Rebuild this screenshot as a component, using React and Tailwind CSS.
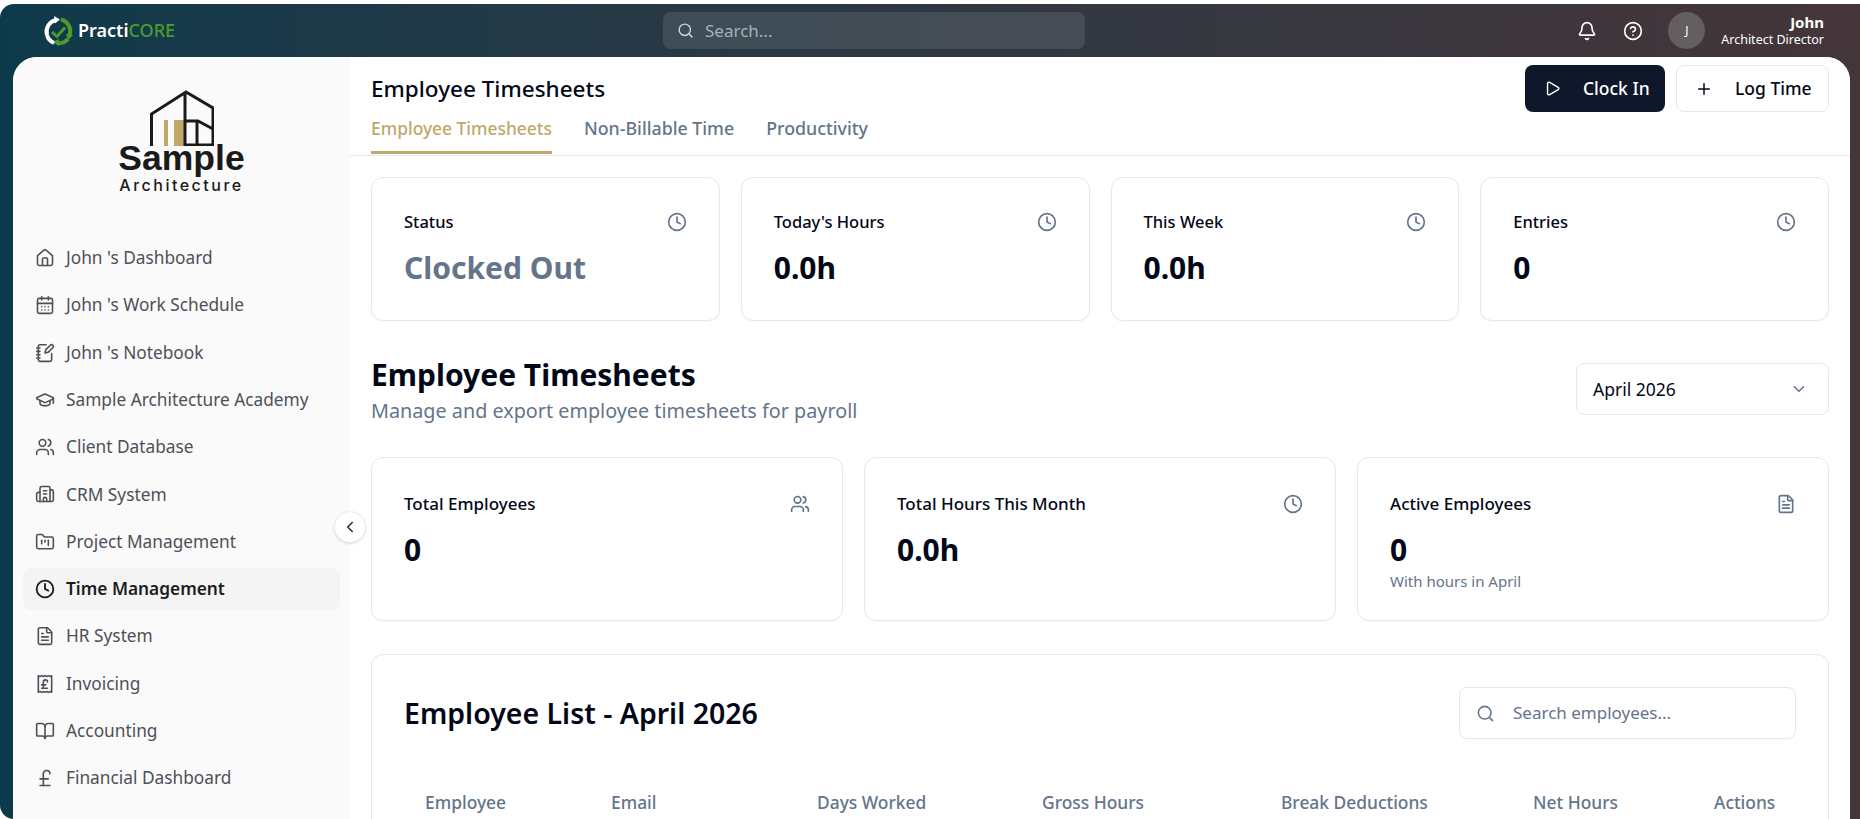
import {
  Bell,
  BookOpen,
  Building2,
  CalendarDays,
  ChevronDown,
  ChevronLeft,
  CircleHelp,
  Clock,
  FileText,
  FolderKanban,
  GraduationCap,
  House,
  NotebookPen,
  Play,
  Plus,
  PoundSterling,
  ReceiptPoundSterling,
  Search,
  Users,
} from 'lucide-react'

const navItems = [
  { label: "John 's Dashboard", icon: House },
  { label: "John 's Work Schedule", icon: CalendarDays },
  { label: "John 's Notebook", icon: NotebookPen },
  { label: 'Sample Architecture Academy', icon: GraduationCap },
  { label: 'Client Database', icon: Users },
  { label: 'CRM System', icon: Building2 },
  { label: 'Project Management', icon: FolderKanban },
  { label: 'Time Management', icon: Clock, active: true },
  { label: 'HR System', icon: FileText },
  { label: 'Invoicing', icon: ReceiptPoundSterling },
  { label: 'Accounting', icon: BookOpen },
  { label: 'Financial Dashboard', icon: PoundSterling },
]

const topStats = [
  { title: 'Status', value: 'Clocked Out', muted: true },
  { title: "Today's Hours", value: '0.0h' },
  { title: 'This Week', value: '0.0h' },
  { title: 'Entries', value: '0' },
]

const monthStats = [
  { title: 'Total Employees', value: '0', icon: Users },
  { title: 'Total Hours This Month', value: '0.0h', icon: Clock },
  { title: 'Active Employees', value: '0', icon: FileText, note: 'With hours in April' },
]

const columns = ['Employee', 'Email', 'Days Worked', 'Gross Hours', 'Break Deductions', 'Net Hours', 'Actions']

function PractiLogo() {
  return (
    <svg viewBox="0 0 32 32" className="h-[32px] w-[32px]" fill="none">
      <path d="M5 20a12 12 0 0 1 9-15" stroke="#fff" strokeWidth="4" />
      <path d="M12 1l6 3.500-5 4z" fill="#fff" />
      <path d="M19 4.500a12 12 0 0 1 8 17" stroke="#4f9a2d" strokeWidth="4" />
      <path d="M31 20l-5 5-2-6z" fill="#4f9a2d" />
      <path d="M26 24a12 12 0 0 1-11 4" stroke="#4f9a2d" strokeWidth="4" />
      <path d="M10 27l7-3v7z" fill="#4f9a2d" />
      <path d="M12 28a12 12 0 0 1-7-8" stroke="#fff" strokeWidth="4" />
      <path d="M10 17l5 4.500 8-9" stroke="#4f9a2d" strokeWidth="3" />
    </svg>
  )
}

function SampleLogo() {
  return (
    <div className="flex h-[148px] flex-col items-center pt-[33px]">
      <svg viewBox="0 0 64 56" className="h-[56px] w-[64px]" fill="none">
        <path d="M14 30h4v26h-4z" fill="#c0a868" />
        <path d="M24 30h10v26H24z" fill="#c0a868" />
        <path d="M1.500 56V24L36 2l27 16v38H35V2" stroke="#1a1a1a" strokeWidth="3" />
        <path d="M35 31h13l15 8" stroke="#1a1a1a" strokeWidth="3" />
        <path d="M47 31v25M35 55h28" stroke="#1a1a1a" strokeWidth="3" />
      </svg>
      <div className="mt-[-5px] font-['Liberation_Sans',sans-serif] text-[35.500px] leading-[34px] font-bold text-[#1a1a1a]">
        Sample
      </div>
      <div className="font-['Inter',sans-serif] text-[16px] leading-[20px] font-medium tracking-[2.500px] text-[#1a1a1a]">
        Architecture
      </div>
    </div>
  )
}

function TopBar() {
  return (
    <header className="flex h-[53px] shrink-0 items-center pr-[36px] pl-[42px]">
      <div className="flex w-[621px] items-center gap-[4px]">
        <PractiLogo />
        <span className="text-[18px] font-semibold text-white">
          Practi<span className="font-medium text-[#4f9a2d]">CORE</span>
        </span>
      </div>
      <div className="flex h-[37px] w-[422px] items-center gap-[11px] rounded-lg bg-white/10 pl-[14px]">
        <Search size={17} className="text-[#cbd5e1]" />
        <span className="text-[17px] text-[#a3b2bd]">Search...</span>
      </div>
      <div className="ml-auto flex items-center">
        <Bell size={20} className="text-white" />
        <CircleHelp size={20} className="ml-[26px] text-white" />
        <div className="ml-[25px] flex h-[37px] w-[37px] items-center justify-center rounded-full bg-[#645e60] text-[12px] text-white">
          J
        </div>
        <div className="ml-[16px] text-right">
          <div className="text-[15px] leading-[18px] font-bold text-white">John</div>
          <div className="text-[12.500px] leading-[18px] text-white">Architect Director</div>
        </div>
      </div>
    </header>
  )
}

function Sidebar() {
  return (
    <aside className="relative w-[337px] shrink-0 rounded-tl-[24px] bg-[#fafafa]">
      <SampleLogo />
      <nav className="mt-[32px] flex flex-col gap-[5.300px] px-[10px]">
        {navItems.map(({ label, icon: Icon, active }) => (
          <div
            key={label}
            className={
              active
                ? 'flex h-[42px] items-center gap-[11px] rounded-lg bg-[#f4f4f5] px-[12px] text-[17.300px] font-semibold text-[#1c1c1f]'
                : 'flex h-[42px] items-center gap-[11px] px-[12px] text-[17.300px] text-[#4f4f58]'
            }
          >
            <Icon size={20} strokeWidth={active ? 2.2 : 1.9} className="shrink-0" />
            {label}
          </div>
        ))}
      </nav>
      <button className="absolute top-[454px] right-[-16px] z-10 flex h-[32px] w-[32px] items-center justify-center rounded-full border border-[#eeeeee] bg-white shadow-sm">
        <ChevronLeft size={18} className="text-[#1f2937]" />
      </button>
    </aside>
  )
}

function StatCard({ title, value, muted, note, icon: Icon = Clock, tall }) {
  return (
    <div
      className={
        tall
          ? 'h-[164px] rounded-xl border border-[#e2e8f0] bg-white px-[32px] pt-[32px] shadow-[0_1px_2px_rgba(0,0,0,0.03)]'
          : 'h-[144px] rounded-xl border border-[#e2e8f0] bg-white px-[32px] pt-[30px] shadow-[0_1px_2px_rgba(0,0,0,0.03)]'
      }
    >
      <div className="flex h-[28px] items-center justify-between">
        <span className={tall ? 'text-[17px] font-medium text-[#020817]' : 'text-[16.500px] font-medium text-[#020817]'}>{title}</span>
        <Icon size={20} className="text-[#64748b]" />
      </div>
      <div className={muted ? 'mt-[12px] text-[30px] leading-[40px] font-bold text-[#64748b]' : 'mt-[12px] text-[30px] leading-[40px] font-bold text-[#020817]'}>
        {value}
      </div>
      {note && <div className="mt-[1px] text-[15px] leading-[20px] text-[#64748b]">{note}</div>}
    </div>
  )
}

function EmployeeList() {
  return (
    <section className="mt-[33px] h-[300px] rounded-xl border border-[#e2e8f0] bg-white">
      <div className="flex items-center justify-between pt-[32px] pr-[32px] pl-[32px]">
        <h2 className="text-[28.500px] leading-[52px] font-semibold text-[#020817]">Employee List - April 2026</h2>
        <div className="flex h-[52px] w-[337px] items-center gap-[18px] rounded-lg border border-[#e2e8f0] pl-[16px]">
          <Search size={19} className="text-[#64748b]" />
          <span className="text-[17px] text-[#64748b]">Search employees...</span>
        </div>
      </div>
      <div className="mt-[50px] grid grid-cols-[186px_206px_225px_239px_252px_181px_1fr] pl-[53px] text-[17.400px] font-medium text-[#64748b]">
        {columns.map((c) => (
          <div key={c}>{c}</div>
        ))}
      </div>
    </section>
  )
}

export default function App() {
  return (
    <div className="h-screen overflow-hidden bg-white pt-[4px] font-['Noto_Sans',sans-serif]">
      <div className="flex h-[815px] flex-col overflow-hidden rounded-l-[14px] bg-gradient-to-r from-[#0d3a4b] to-[#443539]">
        <TopBar />
        <div className="mr-[10px] ml-[13px] flex min-h-0 flex-1 rounded-t-[24px] bg-white">
          <Sidebar />
          <main className="min-w-0 flex-1 overflow-hidden rounded-tr-[24px] bg-white">
            <div className="flex h-[99px] items-start justify-between border-b border-[#e2e8f0] pr-[21px] pl-[21px]">
              <div>
                <h1 className="mt-[17px] text-[22.500px] leading-[30px] font-medium text-[#020817]">Employee Timesheets</h1>
                <div className="mt-[12px] flex gap-[32px] text-[17.400px] font-medium text-[#64748b]">
                  <span className="border-b-[3px] border-[#c0a868] pb-[11px] leading-[24px] text-[#c0a868]">Employee Timesheets</span>
                  <span className="text-[17.800px] leading-[24px]">Non-Billable Time</span>
                  <span className="text-[17.800px] leading-[24px]">Productivity</span>
                </div>
              </div>
              <div className="mt-[8px] flex gap-[11px]">
                <button className="flex h-[47px] w-[140px] items-center gap-[22px] rounded-lg bg-[#0f172a] pl-[19px] text-[17.500px] font-medium text-white">
                  <Play size={17} /> Clock In
                </button>
                <button className="flex h-[47px] w-[153px] items-center gap-[22px] rounded-lg border border-[#e2e8f0] bg-white pl-[18px] text-[17.500px] font-medium text-[#020817]">
                  <Plus size={18} /> Log Time
                </button>
              </div>
            </div>

            <div className="pt-[21px] pr-[21px] pl-[21px]">
              <div className="grid grid-cols-4 gap-[21px]">
                {topStats.map((s) => (
                  <StatCard key={s.title} {...s} />
                ))}
              </div>

              <div className="mt-[31px] flex items-start justify-between">
                <div>
                  <h2 className="text-[30px] leading-[46px] font-bold text-[#020817]">Employee Timesheets</h2>
                  <p className="text-[19.800px] leading-[26px] text-[#64748b]">Manage and export employee timesheets for payroll</p>
                </div>
                <div className="mt-[11px] flex h-[52px] w-[253px] items-center justify-between rounded-lg border border-[#e2e8f0] pr-[20px] pl-[16px] text-[17.500px] text-[#020817]">
                  April 2026
                  <ChevronDown size={18} className="text-[#64748b]" />
                </div>
              </div>

              <div className="mt-[33px] grid grid-cols-3 gap-[21px]">
                {monthStats.map((s) => (
                  <StatCard key={s.title} {...s} tall />
                ))}
              </div>

              <EmployeeList />
            </div>
          </main>
        </div>
      </div>
    </div>
  )
}
